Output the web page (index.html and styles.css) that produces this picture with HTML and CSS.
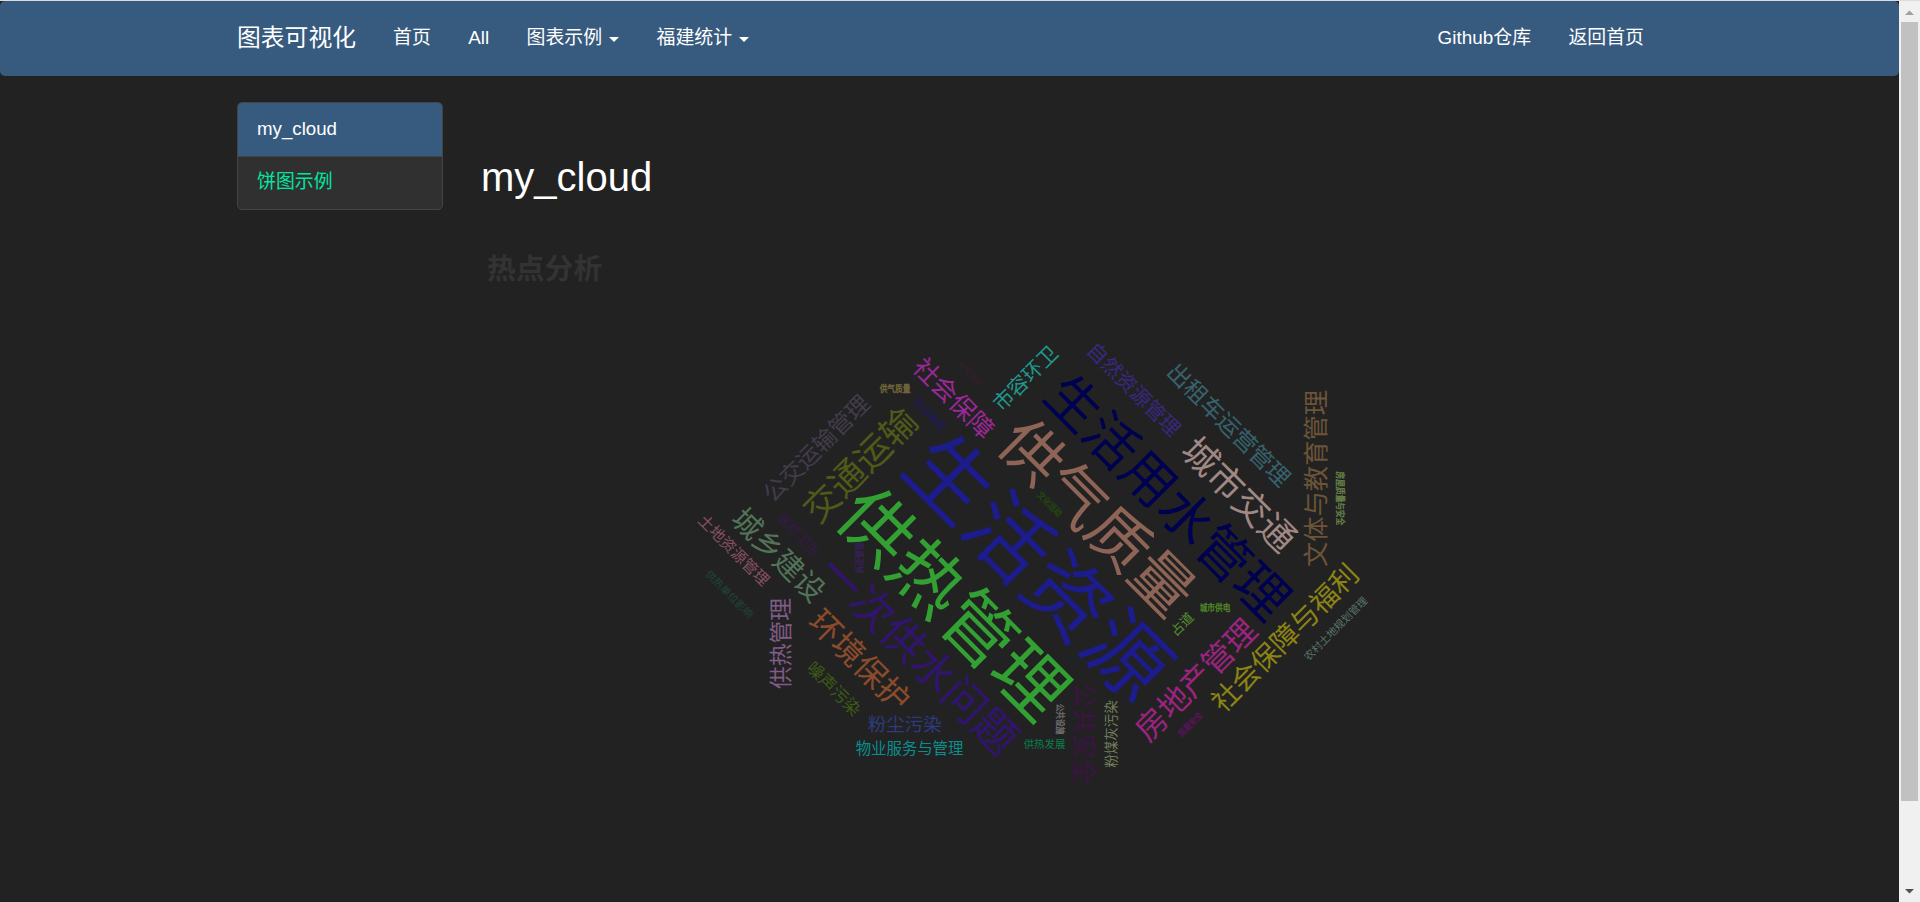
FILE: index.html
```
<!DOCTYPE html>
<html lang="zh">
<head>
<meta charset="utf-8">
<title>my_cloud</title>
<link rel="stylesheet" href="styles.css">
</head>
<body>
<div class="window">
<div class="page">
  <nav class="navbar">
    <a class="brand">图表可视化</a>
    <a class="nav-link">首页</a>
    <a class="nav-link">All</a>
    <a class="nav-link">图表示例<span class="caret"></span></a>
    <a class="nav-link">福建统计<span class="caret"></span></a>
    <div class="nav-right">
      <a class="nav-link">Github仓库</a>
      <a class="nav-link">返回首页</a>
    </div>
  </nav>
  <div class="content">
    <aside class="list-group">
      <a class="list-item active">my_cloud</a>
      <a class="list-item">饼图示例</a>
    </aside>
    <main class="main">
      <h1 class="title">my_cloud</h1>
      <h2 class="chart-title">热点分析</h2>
      <svg class="cloud" id="cloud" viewBox="680 320 720 480" width="720" height="480"></svg>
    </main>
  </div>
</div>
<div class="scrollbar">
  <svg class="arrow" width="21" height="21"><path d="M6 14h9L10.5 9.500z" fill="#a0a0a0"/></svg>
  <div class="thumb"></div>
  <svg class="arrow" width="21" height="21"><path d="M6 8h9l-4.500 4.500z" fill="#505050"/></svg>
</div>
</div>
<script src="cloud.js"></script>
</body>
</html>
```
FILE: styles.css
```
* { box-sizing: border-box; }
html, body { height: 100%; }
body {
  margin: 0;
  overflow: hidden;
  background: #222;
  color: #fff;
  font: 18.9px/28px "Liberation Sans", "Noto Sans CJK SC", sans-serif;
}
.window { display: flex; height: 902px; border-top: 1px solid #dcdcdc; }
.page { flex: 1; min-width: 0; }
.navbar {
  display: flex;
  align-items: center;
  height: 75px;
  padding: 0 255px 2px 237px;
  background: #375a7f;
  border-radius: 5px;
}
.brand { font-size: 23.8px; width: 156px; white-space: nowrap; }
.nav-link { display: flex; align-items: center; margin-right: 37.4px; white-space: nowrap; }
.caret {
  margin: 4px 0 0 7px;
  border: 5px solid transparent;
  border-top-color: #fff;
  border-bottom: 0;
}
.nav-right { display: flex; margin-left: auto; }
.nav-right .nav-link:last-child { margin-right: 0; }
.content { display: flex; padding: 26px 0 0 237px; }
.list-group {
  width: 206px;
  height: 108px;
  flex: none;
  border: 1px solid #444;
  border-radius: 5px;
  background: #303030;
  overflow: hidden;
}
.list-item { display: block; height: 53px; padding: 11px 19px; color: #00e6a0; }
.list-item.active { height: 54px; padding-top: 12px; background: #375a7f; color: #fff; border-bottom: 1px solid #444; font-size: 18.7px; }
.main { padding: 51px 0 0 38px; }
.title { margin: 0; font-size: 40px; line-height: 48px; font-weight: 400; }
.chart-title { margin: 50px 0 0 6px; font-size: 28.8px; line-height: 36px; font-weight: 700; color: #333; }
.cloud { display: block; margin: 33px 0 0 199px; font-family: "Noto Sans CJK SC", sans-serif; font-weight: 400; }
.small-word { stroke: currentColor; stroke-width: 0.35px; }
.scrollbar { width: 21px; background: #f0f0f0; display: flex; flex-direction: column; }
.thumb { width: 17px; height: 779px; margin-left: 2px; background: #c1c1c1; }
.arrow { display: block; flex: none; }
.arrow:last-child { margin-top: auto; }
```
FILE: cloud.js
```
// text, centre x, centre y, font size, rotation, colour
const words = [
  ["生活资源", 1039.5, 566, 83.5, 45, "#1c1c8c"],
  ["供热管理", 954.5, 602.5, 72.5, 45, "#32a032"],
  ["供气质量", 1098, 516.5, 61.5, 45, "#8e6456"],
  ["生活用水管理", 1168.5, 496.5, 53.2, 45, "#000050"],
  ["一次供水问题", 919.5, 654, 43.4, 45, "#311470"],
  ["交通运输", 859.5, 464.5, 36, -45, "#505a18"],
  ["城市交通", 1239.5, 494, 36, 45, "#a08884"],
  ["社会保障", 954, 398, 25.4, 45, "#9c2898"],
  ["市容环卫", 1025, 378, 20.4, -45, "#20988c"],
  ["自然资源管理", 1134, 389, 20.4, 45, "#3a2880"],
  ["出租车运营管理", 1229, 424.5, 23.2, 45, "#37636e"],
  ["文体与教育管理", 1315, 478.5, 25.3, -90, "#6c5438"],
  ["房屋质量与安全", 1340, 498.5, 7.7, 90, "#648048"],
  ["供气质量", 895, 388.3, 7.7, 0, "#74683c"],
  ["公交运输管理", 816, 448, 23.2, -45, "#423c4c"],
  ["城乡建设", 779, 554.5, 29.4, 45, "#527458"],
  ["土地资源管理", 734, 550, 15.5, 45, "#885064"],
  ["医疗卫生", 799, 534.5, 13.4, 45, "#38184c"],
  ["拆迁管理", 859.5, 558, 7.7, -90, "#382058"],
  ["生活噪音", 929.5, 414, 10.3, 45, "#201868"],
  ["大气污染", 969.5, 373.5, 7.7, 45, "#30202c"],
  ["文化活动", 1049.7, 504, 7.7, 45, "#24480f"],
  ["供热单位影响", 729.5, 594, 10.4, 45, "#204638"],
  ["供热管理", 780.5, 643.5, 22.8, -90, "#805c88"],
  ["环境保护", 860, 660, 31.8, 45, "#8c4c2c"],
  ["噪声污染", 834, 688.5, 17, 45, "#3c5c14"],
  ["粉尘污染", 904.7, 724, 18.5, 0, "#2c3c80"],
  ["物业服务与管理", 909.5, 748.5, 15.4, 0, "#089090"],
  ["供热发展", 1044.5, 744, 10.4, 0, "#08804c"],
  ["公共设施", 1060, 719, 7.7, 90, "#6c6c6c"],
  ["公共安全", 1085, 733.5, 25.3, 90, "#3c1444"],
  ["粉煤灰污染", 1110.5, 734, 13.5, -90, "#74805c"],
  ["占道", 1181.7, 624, 13.2, -45, "#549030"],
  ["城市供电", 1215, 608, 7.7, 0, "#508428"],
  ["房地产管理", 1195.5, 679.5, 31.3, -45, "#9c2480"],
  ["社会保障与福利", 1284.5, 637.5, 27.8, -45, "#8c8414"],
  ["农村土地规划管理", 1335.5, 628.5, 10.6, -45, "#587468"],
  ["房屋安全", 1190, 724, 7.7, -45, "#541458"]
];
const cloud = document.getElementById("cloud");
for (const [text, x, y, size, angle, color] of words) {
  const el = document.createElementNS("http://www.w3.org/2000/svg", "text");
  el.textContent = text;
  el.setAttribute("text-anchor", "middle");
  el.setAttribute("y", size * 0.38);
  el.setAttribute("font-size", size);
  el.setAttribute("fill", color);
  // The tiniest words are stretched to keep their strokes legible.
  const tiny = size < 9;
  if (tiny) {
    el.setAttribute("class", "small-word");
    el.setAttribute("color", color);
  }
  el.setAttribute("transform", `translate(${x} ${y}) rotate(${angle}) scale(1 ${tiny ? 1.15 : 1})`);
  cloud.appendChild(el);
}
```
